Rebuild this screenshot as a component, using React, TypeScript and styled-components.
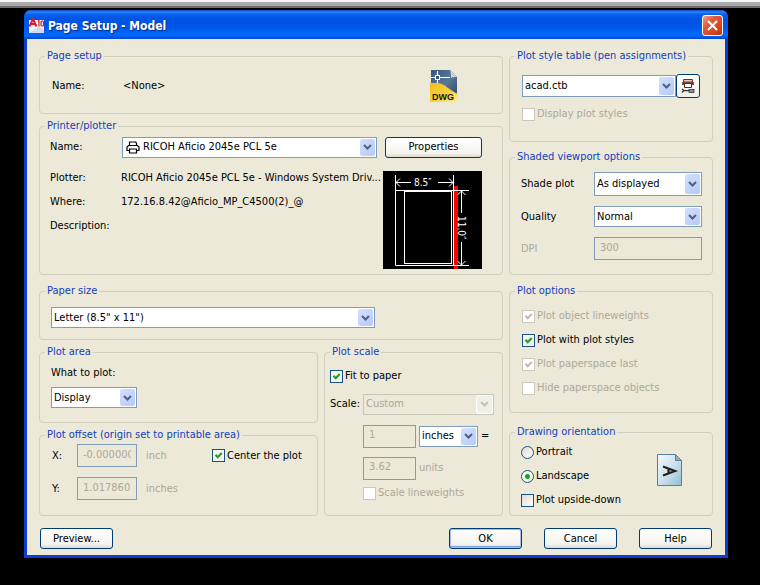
import React from 'react';
import styled, { createGlobalStyle, css } from 'styled-components';

const FACE = '#ece9d8';
const DISABLED = '#aca899';
const FIELD_BORDER = '#7f9db9';

const svgUrl = (markup: string) => `url("data:image/svg+xml,${encodeURIComponent(markup)}")`;

const tick = (color: string) =>
  svgUrl(
    `<svg xmlns="http://www.w3.org/2000/svg" width="11" height="11"><path d="M2.5 4.8 L4.7 7.2 L8.7 3" fill="none" stroke="${color}" stroke-width="2.2"/></svg>`
  );

const GlobalStyle = createGlobalStyle`
  * { box-sizing: border-box; }
  body {
    margin: 0;
    background: #000;
    color: #000;
    font: 11px/14px "DejaVu Sans Condensed", Tahoma, sans-serif;
  }
  button, input, select { font: inherit; color: inherit; margin: 0; }
`;

const Screen = styled.div`
  min-height: 100vh;
  padding: 0 32px 27px 24px;
  background: linear-gradient(#f4f4f4 0 2px, #a9a9ae 2px 6px, #6f6b66 6px 8px, #000 8px);
`;

const TopSpace = styled.div`
  height: 10px;
`;

const Dialog = styled.form`
  border: 3px solid #0a3fd6;
  border-top: 0;
  border-radius: 7px 7px 0 0;
  background: ${FACE};
`;

const TitleBar = styled.header`
  display: flex;
  align-items: center;
  gap: 3px;
  height: 29px;
  margin: 0 -3px;
  padding: 2px 5px 0 4px;
  border-radius: 7px 7px 0 0;
  background: linear-gradient(#0a45c4 0, #2b84fb 2px, #0a62ee 4px, #0053e2 9px, #0057ea 18px, #0066fe 23px, #0066fe 26px, #0046c8 29px);
`;

const Title = styled.h1`
  flex: 1;
  margin: 0;
  color: #fff;
  font-size: 12px;
  font-weight: 700;
  line-height: 18px;
  text-shadow: 1px 1px 1px #0a2a80;
`;

const CloseButton = styled.button`
  display: grid;
  place-items: center;
  width: 21px;
  height: 21px;
  padding: 0;
  border: 1px solid #fff;
  border-radius: 3px;
  background: linear-gradient(135deg, #f0a286, #e2593a 35%, #d9431d 70%, #b93410);
`;

const Body = styled.div`
  display: flex;
  flex-direction: column;
  gap: 9px;
  padding: 10px 12px 6px;
`;

const Columns = styled.div`
  display: grid;
  grid-template-columns: 464fr 204fr;
  gap: 6px;
`;

const Stack = styled.div`
  display: flex;
  flex-direction: column;
  justify-content: space-between;
  gap: 5px;
  min-width: 0;
`;

const Split = styled.div`
  display: grid;
  grid-template-columns: 279fr 179fr;
  gap: 6px;
`;

const Group = styled.fieldset`
  min-width: 0;
  margin: 0;
  padding: 0;
  border: 1px solid #d0d0bf;
  border-radius: 4px;
`;

const Legend = styled.legend`
  height: 14px;
  margin-left: 5px;
  padding: 0 2px;
  color: #1140bd;
  white-space: nowrap;
`;

const Panel = styled.div<{ $pad: string; $gap?: number }>`
  display: flex;
  flex-direction: column;
  gap: ${p => p.$gap ?? 0}px;
  padding: ${p => p.$pad};
`;

const Row = styled.div<{ $h: number }>`
  display: flex;
  align-items: center;
  height: ${p => p.$h}px;
  white-space: nowrap;
`;

const Caption = styled.label<{ $w: number; $disabled?: boolean }>`
  flex: none;
  width: ${p => p.$w}px;
  white-space: nowrap;
  ${p => p.$disabled && css`color: ${DISABLED};`}
`;

const Unit = styled.span`
  flex: none;
  width: 75px;
  padding-left: 9px;
  color: ${DISABLED};
`;

const ScaleRow = styled(Row)`
  gap: 3px;
  padding-left: 33px;
`;

const Grow = styled.span`
  flex: 1;
`;

const PrinterFields = styled.div`
  display: flex;
  gap: 8px;
  align-items: center;
`;

const PrinterName = styled(Row)`
  flex: 1;
`;

const PrinterDetails = styled.div`
  display: flex;
  justify-content: space-between;
  height: 98px;
  white-space: nowrap;
`;

const Facts = styled.dl`
  display: grid;
  grid-template-columns: 71px auto;
  gap: 10px 0;
  align-content: start;
  width: 0;
  flex: 1;
  margin: 0;
`;

const Term = styled.dt``;

const Detail = styled.dd`
  margin: 0;
`;

const SelectBox = styled.span<{ $w?: number; $h?: number }>`
  position: relative;
  display: block;
  height: ${p => p.$h ?? 21}px;
  ${p => (p.$w ? css`flex: none; width: ${p.$w}px;` : css`flex: 1;`)}
`;

const NativeSelect = styled.select<{ $inset?: number }>`
  appearance: none;
  display: block;
  width: 100%;
  height: 100%;
  padding: 0 18px 0 ${p => p.$inset ?? 2}px;
  border: 1px solid ${FIELD_BORDER};
  border-radius: 0;
  background: #fff;
  &:disabled {
    border-color: #c9c7ba;
    background: ${FACE};
    color: ${DISABLED};
    opacity: 1;
  }
`;

const Arrow = styled.span<{ $disabled?: boolean }>`
  position: absolute;
  inset: 2px 2px 2px auto;
  display: grid;
  place-items: center;
  width: 15px;
  border-radius: 2px;
  pointer-events: none;
  background: ${p => (p.$disabled ? '#f1f0e8' : 'linear-gradient(135deg, #d5e0fd, #b5c9f8)')};
  box-shadow: ${p => (p.$disabled ? '0 0 0 1px #fff' : 'none')};
  color: ${p => (p.$disabled ? '#c6c3b5' : '#4d6185')};
`;

const LeadIcon = styled.span`
  position: absolute;
  top: 4px;
  left: 4px;
  display: block;
  height: 13px;
  pointer-events: none;
`;

const TextField = styled.input<{ $w?: number }>`
  ${p => (p.$w ? css`flex: none; width: ${p.$w}px;` : css`flex: 1; min-width: 0;`)}
  height: 23px;
  padding: 0 5px 3px;
  border: 1px solid ${FIELD_BORDER};
  border-radius: 0;
  background: ${FACE};
  &:disabled { color: ${DISABLED}; }
`;

const PushButton = styled.button<{ $w: number; $default?: boolean }>`
  flex: none;
  width: ${p => p.$w}px;
  height: 21px;
  padding: 0;
  border: 1px solid #003c74;
  border-radius: 3px;
  background: linear-gradient(#fff, #f4f3ee 80%, #dcd8cd);
  ${p => p.$default && css`box-shadow: inset 0 0 0 1px #a3bdf0, inset 0 -2px 0 #7f9fe0;`}
`;

const IconButton = styled.button`
  display: grid;
  place-items: center;
  flex: none;
  width: 24px;
  height: 24px;
  padding: 0;
  border: 1px solid #003c74;
  border-radius: 3px;
  background: linear-gradient(#fff, #f2f0e9);
`;

const CheckLabel = styled.label<{ $disabled?: boolean }>`
  display: flex;
  align-items: center;
  gap: 2px;
  white-space: nowrap;
  ${p => p.$disabled && css`color: ${DISABLED};`}
`;

const CheckInput = styled.input`
  appearance: none;
  flex: none;
  width: 13px;
  height: 13px;
  border: 1px solid #1c5180;
  background: linear-gradient(135deg, #dcdcd7, #fff);
  &:checked { background: ${tick('#21a121')}, #f3f7f1; }
  &:disabled { border-color: #cac8bb; background: #fff; }
  &:disabled:checked { background: ${tick('#c0beb2')}, #fff; }
`;

const RadioInput = styled.input`
  appearance: none;
  flex: none;
  width: 13px;
  height: 13px;
  border: 1px solid #1c5180;
  border-radius: 50%;
  background: linear-gradient(135deg, #dcdcd7, #fff);
  &:checked { background: radial-gradient(circle, #21a121 0 2px, #f5f8f3 3px); }
`;

const OptionArea = styled.div`
  display: flex;
  justify-content: space-between;
  align-items: flex-start;
`;

const PageMark = styled.div`
  height: 33px;
  margin: 15px 29px 0 0;
`;

const Footer = styled.footer`
  display: flex;
  gap: 22px;
  padding: 3px 1px 0;
`;

const ArrowGlyph = () => (
  <svg width="9" height="6" viewBox="0 0 9 6" aria-hidden="true">
    <path d="M1 1 L4.5 4.5 L8 1" fill="none" stroke="currentColor" strokeWidth="2" />
  </svg>
);

const Check = ({ label, checked, disabled }: { label: string; checked?: boolean; disabled?: boolean }) => (
  <CheckLabel $disabled={disabled}>
    <CheckInput type="checkbox" defaultChecked={checked} disabled={disabled} />
    {label}
  </CheckLabel>
);

type ComboProps = {
  id: string;
  value: string;
  w?: number;
  h?: number;
  inset?: number;
  disabled?: boolean;
  label?: string;
  icon?: React.ReactNode;
};

const Combo = ({ id, value, w, h, inset, disabled, label, icon }: ComboProps) => (
  <SelectBox $w={w} $h={h}>
    <NativeSelect id={id} disabled={disabled} $inset={inset} aria-label={label}>
      <option>{value}</option>
    </NativeSelect>
    {icon && <LeadIcon>{icon}</LeadIcon>}
    <Arrow $disabled={disabled}>
      <ArrowGlyph />
    </Arrow>
  </SelectBox>
);

const PrinterIcon = () => (
  <svg width="14" height="13" viewBox="0 0 14 13" fill="#fff" stroke="#000" strokeWidth="1.2" aria-hidden="true">
    <path d="M3.5 5 V1 H9.5 L10.5 2 V5" />
    <path d="M2.5 4.5 H11.5 L13 6 V9.500 H1 V6 Z" />
    <path d="M3.500 8 H10.500 V12 H3.500 Z" />
  </svg>
);

const AppIcon = () => (
  <svg width="17" height="18" viewBox="0 0 17 18" aria-hidden="true">
    <path d="M1 3 H16 V16 H1 Z" fill="#f1f2f7" />
    <path d="M1 16 L11 10 L16 13 V16 Z" fill="#d5dae6" />
    <path d="M1.500 9.500 L5 2 L8.500 9.500 M3 7 H7" fill="none" stroke="#d5202c" strokeWidth="2" />
    <path d="M10 4.500 L11 3.500 V9.500" fill="none" stroke="#d5202c" strokeWidth="1.200" />
    <rect x="13" y="4" width="2.500" height="5" rx="1" fill="none" stroke="#d5202c" strokeWidth="1.200" />
  </svg>
);

const DwgIcon = () => (
  <svg width="29" height="33" viewBox="0 0 29 33" aria-hidden="true">
    <defs>
      <linearGradient id="dwgBlue" x1="0" y1="0" x2="1" y2="1">
        <stop offset="0" stopColor="#34557c" />
        <stop offset="0.5" stopColor="#5b7896" />
        <stop offset="1" stopColor="#263f62" />
      </linearGradient>
      <linearGradient id="dwgGold" x1="0" y1="0" x2="1" y2="1">
        <stop offset="0" stopColor="#f0bd20" />
        <stop offset="0.6" stopColor="#f9d43c" />
        <stop offset="1" stopColor="#fff0a0" />
      </linearGradient>
    </defs>
    <path d="M1 0 H20 L27 7 V32 H1 Z" fill="url(#dwgBlue)" />
    <path d="M20 0 L27 7 C24 7 22 7 21 8 C21 5 21 3 20 0 Z" fill="#c9d5e0" />
    <path d="M7.500 1 V13 M1 7.500 H20" stroke="#fff" strokeWidth="1.200" />
    <rect x="5.500" y="5.500" width="4" height="4" fill="#34557c" stroke="#fff" />
    <path d="M0 13 H8 C15 14 19 20 28 24 V32 H0 Z" fill="url(#dwgGold)" />
    <text x="2" y="30" fontFamily="Liberation Sans, sans-serif" fontWeight="700" fontSize="9" fill="#1b1600">
      DWG
    </text>
  </svg>
);

const PlotStyleIcon = () => (
  <svg width="14" height="16" viewBox="0 0 14 16" aria-hidden="true">
    <path d="M2.500 1.500 H11.500 V4 H2.500 Z" fill="#e5cfc7" stroke="#6e2a20" />
    <path d="M1 4 H13 V7 H1 Z" fill="#8a4436" />
    <path d="M3.500 5.500 H10.500 V9.500 H3.500 Z" fill="#fff" stroke="#4d2a24" />
    <path d="M1 11 L3 12.500 L1 14.500 M3 12.700 H9" fill="none" stroke="#333" strokeWidth="1.300" />
    <rect x="8" y="11.500" width="5" height="3" fill="#8b8f98" stroke="#333" strokeWidth="0.800" />
  </svg>
);

const PaperPreview = () => (
  <svg width="99" height="98" viewBox="0 0 99 98" role="img" aria-label="Paper preview">
    <rect width="99" height="98" fill="#000" />
    <rect x="71" y="15" width="4" height="83" fill="#f00" />
    <g fill="none" stroke="#fff">
      <path d="M12.500 4 V94.500 H86 M12.500 19.500 H70 M70.500 4 V94" />
      <rect x="21.500" y="20.500" width="47" height="72" />
      <path d="M12 11.500 H28 M55 11.500 H70 M17 7.500 L13 11.500 L17 15.500 M66 7.500 L70 11.500 L66 15.500" />
      <path d="M71 19.500 H86 M78.500 20 V42 M78.500 71 V94 M74.500 24 L78.500 20 L82.500 24 M74.500 90 L78.500 94 L82.500 90" />
    </g>
    <g fill="#fff" fontFamily="DejaVu Sans Condensed, sans-serif" fontSize="10">
      <text x="31" y="15">8.5″</text>
      <text x="45" y="-75" transform="rotate(90)">11.0″</text>
    </g>
  </svg>
);

const LandscapeIcon = () => (
  <svg width="26" height="33" viewBox="0 0 26 33" role="img" aria-label="Landscape page">
    <defs>
      <linearGradient id="sheet" x1="0" y1="0" x2="1" y2="1">
        <stop offset="0" stopColor="#f6fafc" />
        <stop offset="0.5" stopColor="#cfe2ec" />
        <stop offset="1" stopColor="#8fbdd4" />
      </linearGradient>
    </defs>
    <path d="M0.500 0.500 H18.500 L24.500 6.500 V31.500 H0.500 Z" fill="url(#sheet)" stroke="#5580a0" />
    <path d="M18.500 0.500 V6.500 H24.500 Z" fill="#8fb4cc" stroke="#5580a0" />
    <path d="M6 12.500 L18 17 L6 21.500 M11.500 14 V20" fill="none" stroke="#222" strokeWidth="2.200" />
  </svg>
);

export default function App() {
  return (
    <>
      <GlobalStyle />
      <Screen>
        <TopSpace />
        <Dialog onSubmit={e => e.preventDefault()}>
          <TitleBar>
            <AppIcon />
            <Title>Page Setup - Model</Title>
            <CloseButton type="button" aria-label="Close">
              <svg width="13" height="13" viewBox="0 0 13 13" aria-hidden="true">
                <path d="M2 2 L11 11 M11 2 L2 11" stroke="#fff" strokeWidth="2" />
              </svg>
            </CloseButton>
          </TitleBar>
          <Body>
            <Columns>
              <Stack>
                <Group>
                  <Legend>Page setup</Legend>
                  <Panel $pad="5px 43px 9px 12px">
                    <Row $h={36}>
                      <Caption as="span" $w={71}>Name:</Caption>
                      <span>&lt;None&gt;</span>
                      <Grow />
                      <DwgIcon />
                    </Row>
                  </Panel>
                </Group>
                <Group>
                  <Legend>Printer/plotter</Legend>
                  <Panel $pad="3px 20px 5px 10px" $gap={13}>
                    <PrinterFields>
                      <PrinterName $h={22}>
                        <Caption htmlFor="printer" $w={72}>Name:</Caption>
                        <Combo id="printer" value="RICOH Aficio 2045e PCL 5e" inset={20} icon={<PrinterIcon />} />
                      </PrinterName>
                      <PushButton type="button" $w={97}>Properties</PushButton>
                    </PrinterFields>
                    <PrinterDetails>
                      <Facts>
                        <Term>Plotter:</Term>
                        <Detail>RICOH Aficio 2045e PCL 5e - Windows System Driv...</Detail>
                        <Term>Where:</Term>
                        <Detail>172.16.8.42@Aficio_MP_C4500(2)_@</Detail>
                        <Term>Description:</Term>
                        <Detail />
                      </Facts>
                      <PaperPreview />
                    </PrinterDetails>
                  </Panel>
                </Group>
              </Stack>
              <Stack>
                <Group>
                  <Legend>Plot style table (pen assignments)</Legend>
                  <Panel $pad="11px 12px 19px" $gap={8}>
                    <Row $h={24}>
                      <Combo id="style-table" label="Plot style table" value="acad.ctb" h={22} />
                      <IconButton type="button" aria-label="Edit plot style table">
                        <PlotStyleIcon />
                      </IconButton>
                    </Row>
                    <Row $h={16}>
                      <Check label="Display plot styles" disabled />
                    </Row>
                  </Panel>
                </Group>
                <Group>
                  <Legend>Shaded viewport options</Legend>
                  <Panel $pad="8px 10px 14px 11px" $gap={10}>
                    <Row $h={24}>
                      <Caption htmlFor="shade" $w={73}>Shade plot</Caption>
                      <Combo id="shade" value="As displayed" h={24} />
                    </Row>
                    <Row $h={21}>
                      <Caption htmlFor="quality" $w={73}>Quality</Caption>
                      <Combo id="quality" value="Normal" />
                    </Row>
                    <Row $h={23}>
                      <Caption htmlFor="dpi" $w={73} $disabled>DPI</Caption>
                      <TextField id="dpi" defaultValue="300" disabled />
                    </Row>
                  </Panel>
                </Group>
              </Stack>
            </Columns>
            <Columns>
              <Stack>
                <Group>
                  <Legend>Paper size</Legend>
                  <Panel $pad="9px 127px 11px 11px">
                    <Row $h={21}>
                      <Combo id="paper" label="Paper size" value={'Letter (8.5" x 11")'} />
                    </Row>
                  </Panel>
                </Group>
                <Split>
                  <Stack>
                    <Group>
                      <Legend>Plot area</Legend>
                      <Panel $pad="7px 11px 14px" $gap={7}>
                        <Caption htmlFor="area" $w={86}>What to plot:</Caption>
                        <Row $h={21}>
                          <Combo id="area" value="Display" w={86} />
                        </Row>
                      </Panel>
                    </Group>
                    <Group>
                      <Legend>Plot offset (origin set to printable area)</Legend>
                      <Panel $pad="2px 12px 15px" $gap={10}>
                        <Row $h={23}>
                          <Caption htmlFor="offset-x" $w={25}>X:</Caption>
                          <TextField id="offset-x" $w={60} defaultValue="-0.000000" disabled />
                          <Unit>inch</Unit>
                          <Check label="Center the plot" checked />
                        </Row>
                        <Row $h={23}>
                          <Caption htmlFor="offset-y" $w={25}>Y:</Caption>
                          <TextField id="offset-y" $w={60} defaultValue="1.017860" disabled />
                          <Unit>inches</Unit>
                        </Row>
                      </Panel>
                    </Group>
                  </Stack>
                  <Group>
                    <Legend>Plot scale</Legend>
                    <Panel $pad="5px 8px 13px 5px">
                      <Row $h={24}>
                        <Check label="Fit to paper" checked />
                      </Row>
                      <Row $h={32}>
                        <Caption htmlFor="scale" $w={33}>Scale:</Caption>
                        <Combo id="scale" value="Custom" disabled />
                      </Row>
                      <ScaleRow $h={32}>
                        <TextField $w={53} defaultValue="1" aria-label="Paper units" disabled />
                        <Combo id="units" label="Paper unit" value="inches" w={59} />
                        <span>=</span>
                      </ScaleRow>
                      <ScaleRow $h={32}>
                        <TextField id="drawing-units" $w={53} defaultValue="3.62" disabled />
                        <Caption htmlFor="drawing-units" $w={40} $disabled>units</Caption>
                      </ScaleRow>
                      <ScaleRow $h={18}>
                        <Check label="Scale lineweights" disabled />
                      </ScaleRow>
                    </Panel>
                  </Group>
                </Split>
              </Stack>
              <Stack>
                <Group>
                  <Legend>Plot options</Legend>
                  <Panel $pad="6px 12px 12px">
                    <Row $h={24}><Check label="Plot object lineweights" checked disabled /></Row>
                    <Row $h={24}><Check label="Plot with plot styles" checked /></Row>
                    <Row $h={24}><Check label="Plot paperspace last" checked disabled /></Row>
                    <Row $h={24}><Check label="Hide paperspace objects" disabled /></Row>
                  </Panel>
                </Group>
                <Group>
                  <Legend>Drawing orientation</Legend>
                  <OptionArea>
                    <Panel $pad="1px 0 3px 11px">
                      <Row $h={24}>
                        <CheckLabel><RadioInput type="radio" name="orientation" />Portrait</CheckLabel>
                      </Row>
                      <Row $h={24}>
                        <CheckLabel><RadioInput type="radio" name="orientation" defaultChecked />Landscape</CheckLabel>
                      </Row>
                      <Row $h={24}><Check label="Plot upside-down" /></Row>
                    </Panel>
                    <PageMark><LandscapeIcon /></PageMark>
                  </OptionArea>
                </Group>
              </Stack>
            </Columns>
            <Footer>
              <PushButton type="button" $w={73}>Preview...</PushButton>
              <Grow />
              <PushButton type="submit" $w={73} $default>OK</PushButton>
              <PushButton type="button" $w={73}>Cancel</PushButton>
              <PushButton type="button" $w={73}>Help</PushButton>
            </Footer>
          </Body>
        </Dialog>
      </Screen>
    </>
  );
}
